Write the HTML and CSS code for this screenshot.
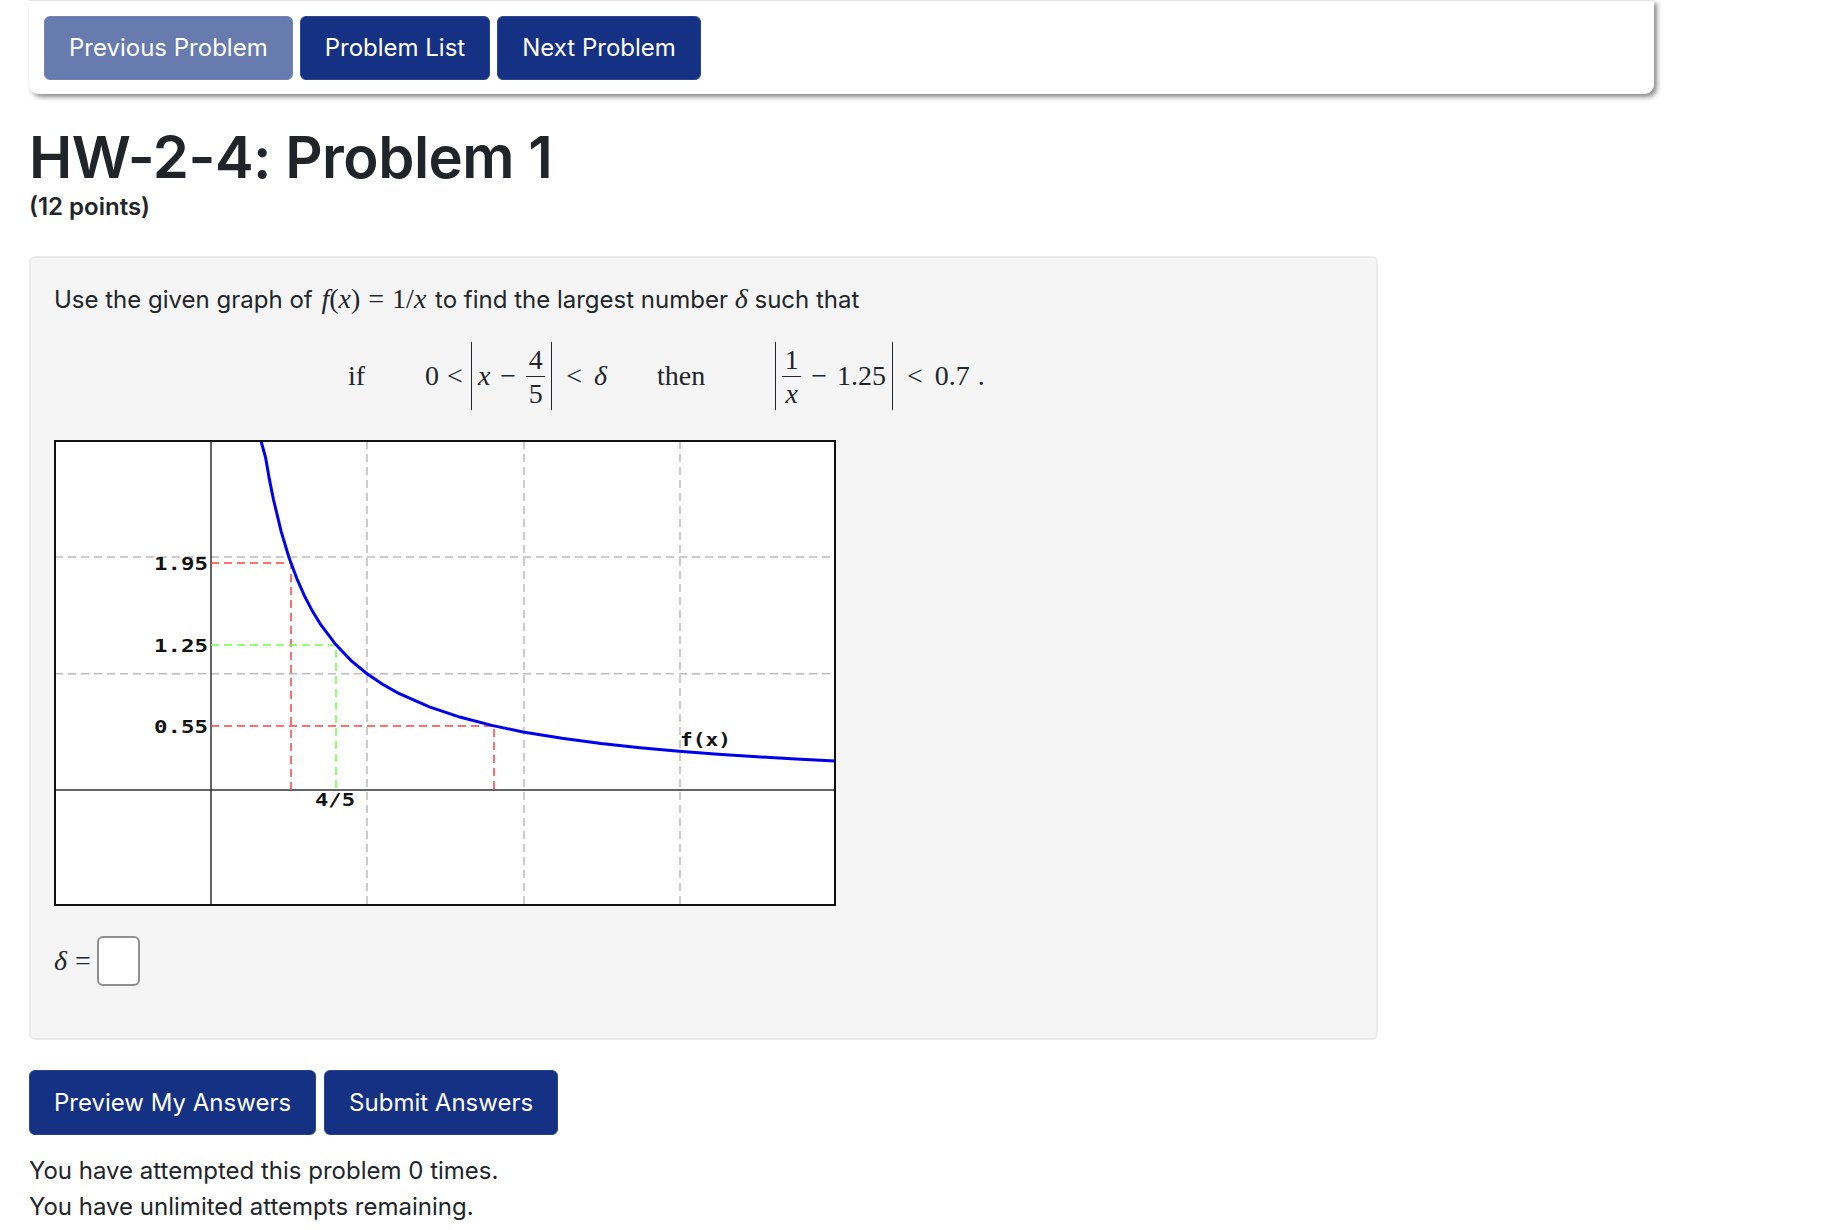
FILE: index.html
```html
<!DOCTYPE html>
<html lang="en">

<head>
    <meta charset="UTF-8">
    <meta name="viewport" content="width=device-width, initial-scale=1.0">
    <title>HW-2-4: Problem 1</title>
    <link rel="stylesheet" href="styles.css">
</head>

<body>
    <div class="problem-nav">
        <a class="btn btn-disabled">Previous Problem</a>
        <a class="btn">Problem List</a>
        <a class="btn">Next Problem</a>
    </div>

    <h1>HW-2-4: Problem 1</h1>
    <div class="points">(12 points)</div>

    <div class="problem-card">
        <p class="intro">Use the given graph of <span class="math inline-math"><i>f</i>(<i>x</i>)<span class="rel">=</span>1/<i>x</i></span> to find the largest number <span class="math"><i>δ</i></span> such that</p>

        <div class="math display">
            <span class="word">if</span>
            <span class="group group-one">
                <span>0</span><span class="rel">&lt;</span>
                <span class="abs abs-one"><i>x</i><span class="minus">−</span><span class="frac"><span>4</span><span>5</span></span></span>
                <span class="rel rel-after">&lt;</span><i>δ</i>
            </span>
            <span class="word word-then">then</span>
            <span class="group group-two">
                <span class="abs abs-two"><span class="frac frac-x"><span>1</span><span><i>x</i></span></span><span class="minus">−</span><span>1.25</span></span>
                <span class="rel rel-after">&lt;</span><span>0.7</span><span class="stop">.</span>
            </span>
        </div>

        <svg class="graph" width="783" height="466" viewBox="54 440 783 466">
            <rect x="55" y="441" width="780" height="464" fill="#fff" />
            <g class="grid">
                <path d="M55 557H835M55 673.7H835M367 441V905M524 441V905M680 441V905" />
            </g>
            <path class="axis" d="M211 441V905M55 790H835" />
            <path class="red" d="M211 563H291V790M211 726H494V790" />
            <path class="green" d="M211 645H336V790" />
            <polyline class="curve" points="261,441 265.6,457.7 269.5,479.9 273.4,499.3 281.2,531.6 289,557.4 296.8,578.5 304.6,596.2 312.4,611.1 320.2,623.9 335.8,644.6 351.4,660.8 367,673.7 382.6,684.3 398.2,693.1 429.4,706.9 460.6,717.3 491.8,725.4 523,731.9 562,738.3 601,743.5 640,747.7 679,751.2 718,754.2 757,756.8 796,759 835,760.9" />
            <rect class="frame" x="55" y="441" width="780" height="464" />
            <text x="154" y="570" textLength="54" lengthAdjust="spacingAndGlyphs">1.95</text>
            <text x="154" y="652" textLength="54" lengthAdjust="spacingAndGlyphs">1.25</text>
            <text x="154" y="733" textLength="54" lengthAdjust="spacingAndGlyphs">0.55</text>
            <text x="315" y="806" textLength="40" lengthAdjust="spacingAndGlyphs">4/5</text>
            <text x="680" y="746" textLength="51" lengthAdjust="spacingAndGlyphs">f(x)</text>
        </svg>

        <div class="answer-row">
            <span class="math"><i>δ</i><span class="rel">=</span></span>
            <input class="answer" type="text">
        </div>
    </div>

    <div class="actions">
        <a class="btn btn-large">Preview My Answers</a>
        <a class="btn btn-large">Submit Answers</a>
    </div>

    <div class="attempts">
        <div>You have attempted this problem 0 times.</div>
        <div>You have unlimited attempts remaining.</div>
    </div>
</body>

</html>
```

FILE: styles.css
```css
body {
    margin: 0;
    background-color: #fff;
    font-family: Inter, Roboto, sans-serif;
    font-size: 24px;
    line-height: 36px;
    color: #212529;
}

.problem-nav {
    display: flex;
    gap: 7px;
    width: 1625px;
    height: 94px;
    box-sizing: border-box;
    margin-left: 29px;
    padding: 15px;
    background-color: #fff;
    border-top: 1px solid #e4e4e4;
    border-radius: 0 0 9px 9px;
    box-shadow: 3px 3px 5px #8a8a8a;
}

.btn {
    display: flex;
    align-items: center;
    height: 64px;
    box-sizing: border-box;
    padding: 0 24px;
    background-color: #153184;
    border: 1px solid #2a4590;
    border-radius: 6px;
    color: #fff;
}

.btn-disabled {
    background-color: #677bae;
    border-color: #7385b6;
}

.btn-large {
    height: 65px;
}

h1 {
    margin: 28px 0 0 29px;
    font-size: 58px;
    font-weight: 600;
    line-height: 70px;
    letter-spacing: -0.5px;
}

.points {
    margin: -3px 0 0 29px;
    font-weight: 600;
}

.problem-card {
    width: 1349px;
    height: 784px;
    box-sizing: border-box;
    margin: 31px 0 0 29px;
    padding: 23px 23px 0;
    background-color: #f5f5f5;
    border: 2px solid #ebebeb;
    border-radius: 6px;
}

.intro {
    margin: 0;
}

.math {
    font-family: "Liberation Serif", serif;
    font-size: 28px;
}

.inline-math {
    margin: 0 2px;
}

.rel {
    margin: 0 8px;
}

.display {
    display: flex;
    align-items: center;
    height: 68px;
    margin-top: 24px;
    padding-left: 294px;
}

.group {
    display: flex;
    align-items: center;
}

.group-one {
    margin-left: 60px;
}

.word-then {
    margin-left: 50px;
}

.group-two {
    margin-left: 70px;
}

.abs {
    display: flex;
    align-items: center;
    height: 68px;
    padding: 0 6px;
    border-left: 1.5px solid #212529;
    border-right: 1.5px solid #212529;
}

.minus {
    margin: 0 10px;
}

.frac {
    display: flex;
    flex-direction: column;
    align-items: center;
    width: 19px;
    line-height: 33px;
}

.frac span:first-child {
    border-bottom: 1.5px solid #212529;
    width: 100%;
    text-align: center;
}

.rel-after {
    margin: 0 12px 0 14px;
}

.stop {
    margin-left: 8px;
}

.graph {
    display: block;
    margin-top: 30px;
}

.graph .grid {
    fill: none;
    stroke: #bcbcbc;
    stroke-width: 1.5;
    stroke-dasharray: 8 5;
}

.graph .axis {
    fill: none;
    stroke: #333;
    stroke-width: 1.5;
}

.graph .frame {
    fill: none;
    stroke: #111;
    stroke-width: 2;
}

.graph .red {
    fill: none;
    stroke: #ff4040;
    stroke-width: 1.5;
    stroke-dasharray: 8 5;
}

.graph .green {
    fill: none;
    stroke: #70ff40;
    stroke-width: 1.5;
    stroke-dasharray: 8 5;
}

.graph .curve {
    fill: none;
    stroke: #0000f0;
    stroke-width: 3;
}

.graph text {
    font-family: "DejaVu Sans Mono", monospace;
    font-size: 17px;
    font-weight: bold;
    fill: #111;
}

.answer-row {
    display: flex;
    align-items: center;
    margin-top: 30px;
}

.answer-row .rel {
    margin-right: 6px;
}

.answer {
    width: 43px;
    height: 50px;
    box-sizing: border-box;
    background-color: #fff;
    border: 2px solid #8f8f8f;
    border-radius: 6px;
}

.actions {
    display: flex;
    gap: 8px;
    margin: 30px 0 0 29px;
}

.attempts {
    margin: 18px 0 0 29px;
}
```
